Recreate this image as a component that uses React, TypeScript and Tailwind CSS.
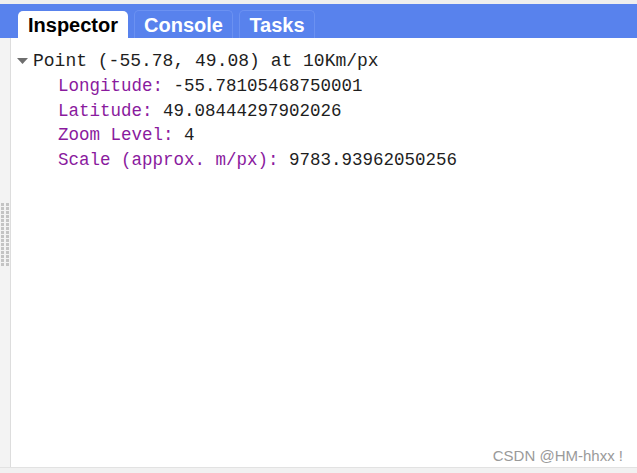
import { Fragment } from 'react';

const rows = [
  { label: 'Longitude:', value: '-55.78105468750001' },
  { label: 'Latitude:', value: '49.08444297902026' },
  { label: 'Zoom Level:', value: '4' },
  { label: 'Scale (approx. m/px):', value: '9783.93962050256' },
];

export default function App() {
  return (
    <div className="w-[637px] h-[473px] flex flex-col bg-[#f1f1f1] overflow-hidden">
      <div className="h-[4px] bg-[#eeeeee]" />
      {/* Tab bar */}
      <div className="h-[34px] bg-[#5882ed] flex items-end pl-[18px] gap-[6px] font-['Liberation_Sans',Arial,sans-serif] font-bold text-[20px]">
        <div className="h-[27px] w-[110px] bg-white rounded-t-[5px] flex items-center justify-center text-black">
          Inspector
        </div>
        <div className="h-[28px] w-[99px] rounded-t-[5px] border border-b-0 border-[#6b91f1] flex items-center justify-center text-white">
          Console
        </div>
        <div className="h-[28px] w-[76px] rounded-t-[5px] border border-b-0 border-[#6b91f1] flex items-center justify-center text-white">
          Tasks
        </div>
      </div>
      <div className="flex flex-1">
        {/* Left resize strip */}
        <div className="w-[11px] bg-[#f3f3f3] border-r border-[#dddddd] flex items-center pt-[30px]">
          <div className="grid grid-cols-2 gap-x-[2px] gap-y-[1px] ml-[1px] mb-[66px]">
            {Array.from({ length: 32 }).map((_, i) => (
              <div key={i} className="w-[3px] h-[3px] bg-[#c4c4c4]" />
            ))}
          </div>
        </div>
        {/* Content */}
        <div className="flex-1 bg-white relative pt-[11px] font-['Liberation_Mono','Courier_New',monospace] text-[#1e1e1e]">
          <div className="flex items-center h-[24px] pl-[6px] text-[18px] font-medium">
            <svg width="11" height="7" viewBox="0 0 11 7" className="mr-[5px]">
              <path d="M0 0 H11 L5.5 6 Z" fill="#6e6e6e" />
            </svg>
            <span>Point (-55.78, 49.08) at 10Km/px</span>
          </div>
          <div className="pl-[47px] text-[17.5px] leading-[24.5px] mt-[1px]">
            {rows.map((r) => (
              <div key={r.label} className="whitespace-pre">
                <span className="text-[#8a1a9e]">{r.label}</span>
                <Fragment> </Fragment>
                <span>{r.value}</span>
              </div>
            ))}
          </div>
          <div className="absolute right-[14px] bottom-[0px] font-['Liberation_Sans',Arial,sans-serif] text-[15px] text-[#9a9a9a]">
            CSDN @HM-hhxx !
          </div>
        </div>
      </div>
      <div className="h-[6px] bg-[#f1f1f1] border-t border-[#e2e2e2]" />
    </div>
  );
}
